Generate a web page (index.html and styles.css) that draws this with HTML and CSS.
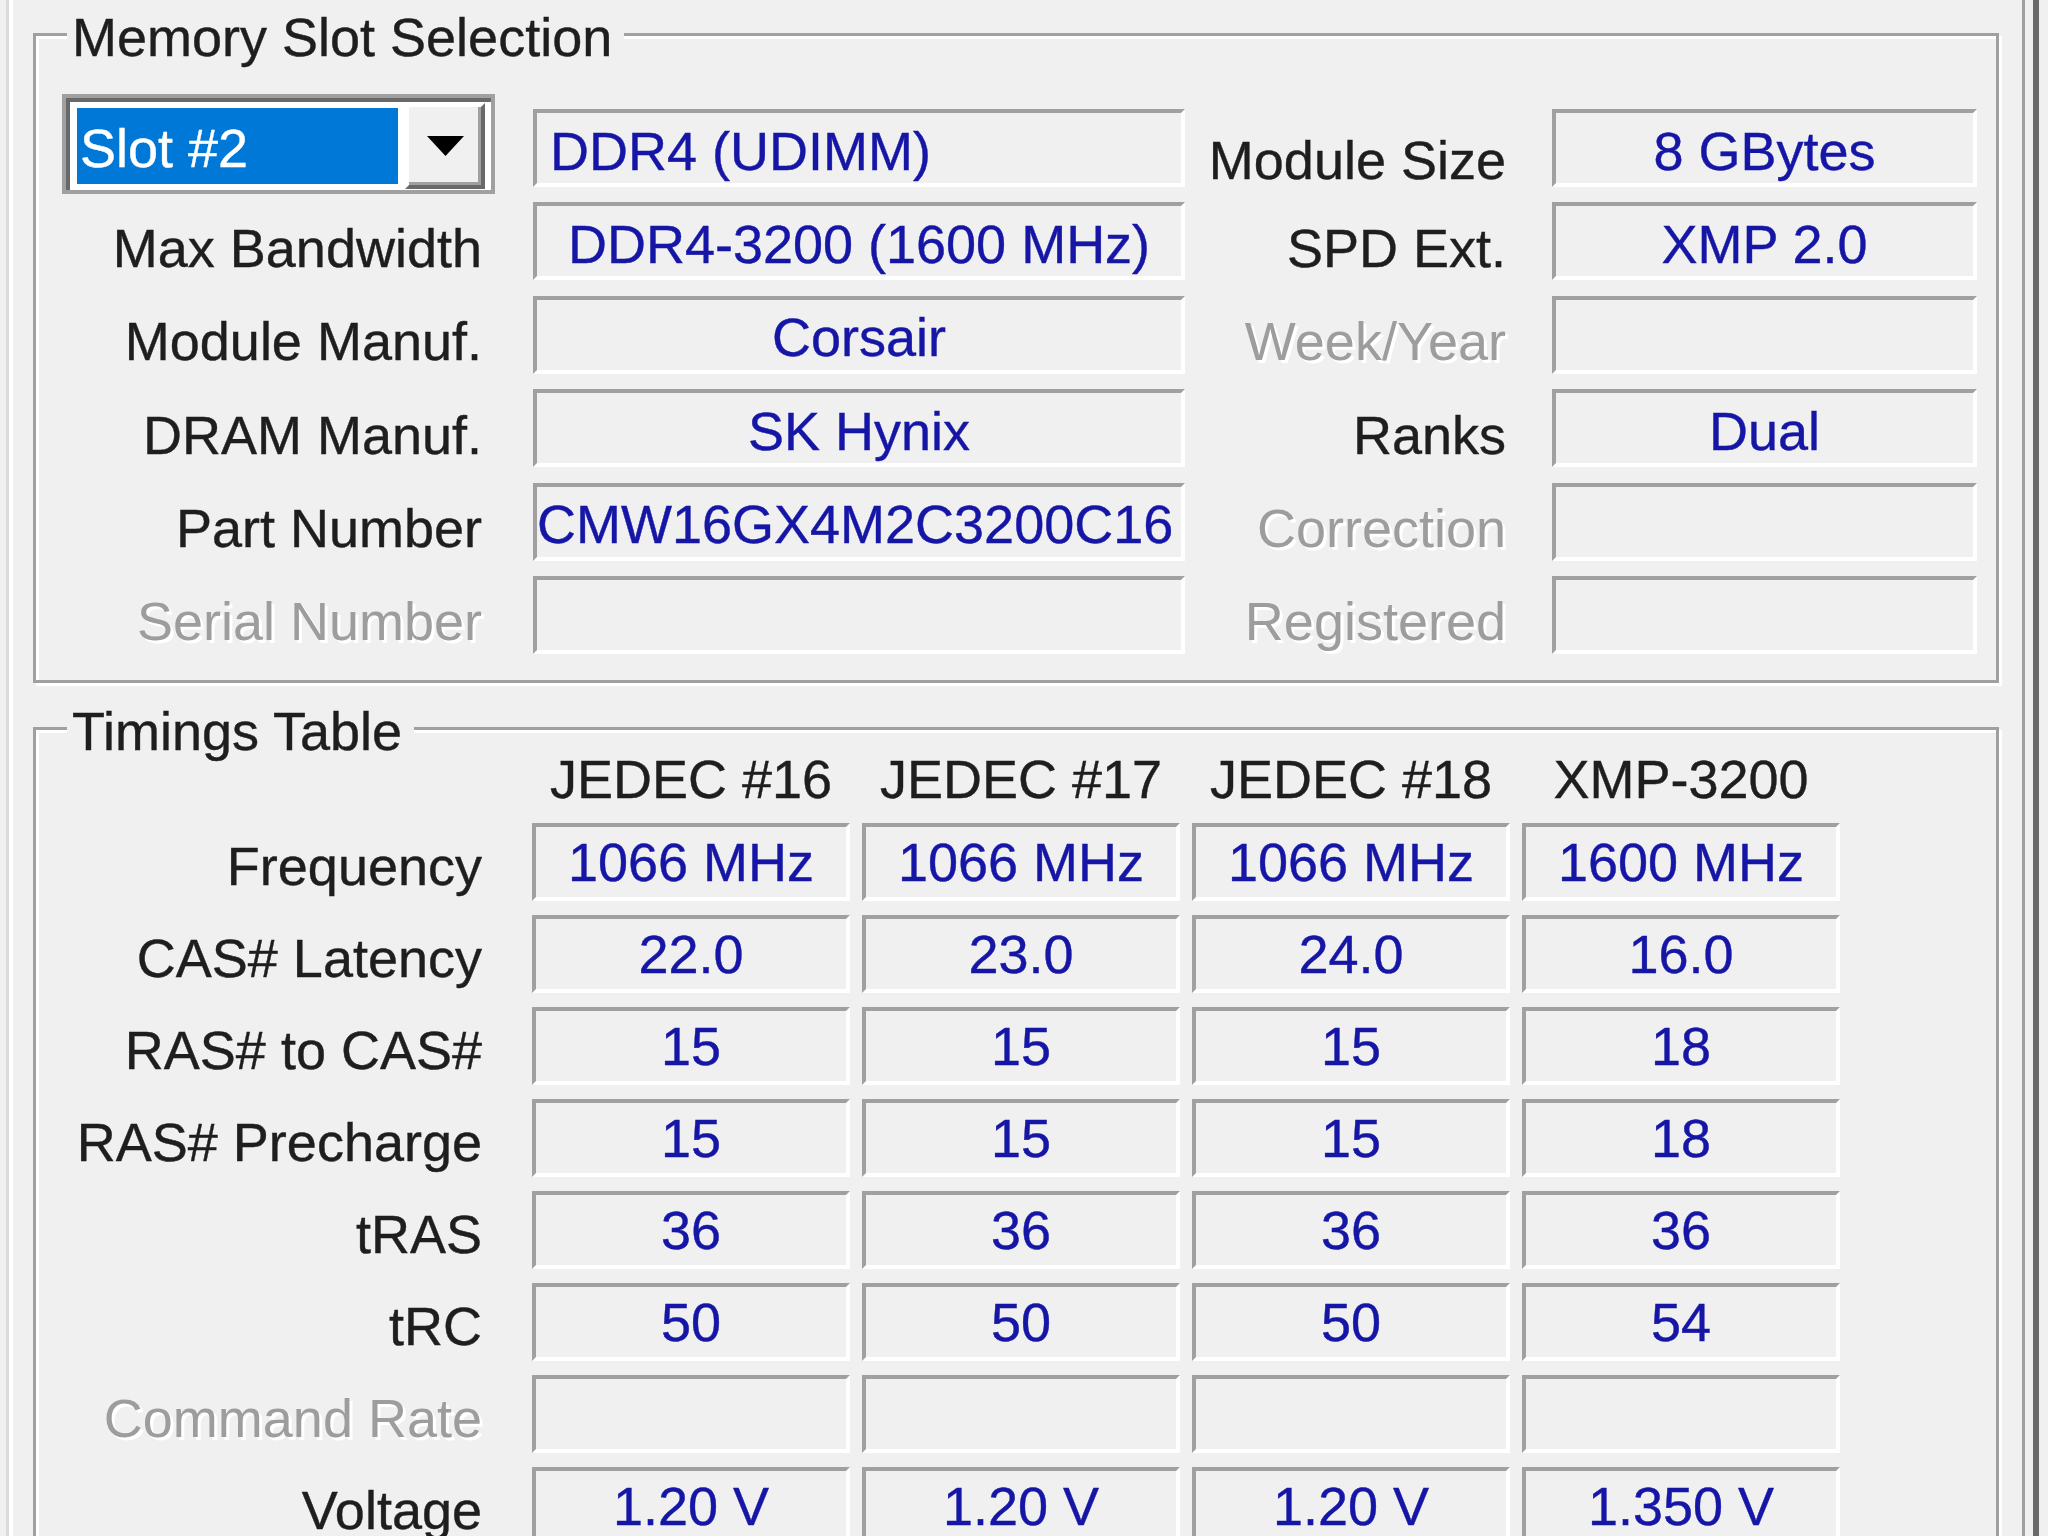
FILE: index.html
```html
<!DOCTYPE html>
<html lang="en">
<head>
  <meta charset="UTF-8" />
  <title>SPD</title>
  <link rel="stylesheet" href="styles.css">
</head>
<body>
  <div class="window">
    <div class="tabpage">

      <div class="group slot-group">
        <span class="legend">Memory Slot Selection</span>
        <div class="slot-grid">
          <div class="combo">
            <span class="combo-value">Slot #2</span>
            <span class="combo-btn">
              <svg width="37" height="20" viewBox="0 0 37 20"><polygon points="0,0 37,0 18.5,20" fill="#000"/></svg>
            </span>
          </div>
          <div class="field left">DDR4 (UDIMM)</div>
          <div class="label side low">Module Size</div>
          <div class="field">8 GBytes</div>

          <div class="label">Max Bandwidth</div>
          <div class="field">DDR4-3200 (1600 MHz)</div>
          <div class="label side">SPD Ext.</div>
          <div class="field">XMP 2.0</div>

          <div class="label">Module Manuf.</div>
          <div class="field">Corsair</div>
          <div class="label side dim">Week/Year</div>
          <div class="field"></div>

          <div class="label">DRAM Manuf.</div>
          <div class="field">SK Hynix</div>
          <div class="label side">Ranks</div>
          <div class="field">Dual</div>

          <div class="label">Part Number</div>
          <div class="field tight">CMW16GX4M2C3200C16</div>
          <div class="label side dim">Correction</div>
          <div class="field"></div>

          <div class="label dim">Serial Number</div>
          <div class="field"></div>
          <div class="label side dim">Registered</div>
          <div class="field"></div>
        </div>
      </div>

      <div class="group timings-group">
        <span class="legend">Timings Table</span>
        <div class="timings-grid">
          <div></div>
          <div class="col-head">JEDEC #16</div>
          <div class="col-head">JEDEC #17</div>
          <div class="col-head">JEDEC #18</div>
          <div class="col-head">XMP-3200</div>

          <div class="label">Frequency</div>
          <div class="field">1066 MHz</div>
          <div class="field">1066 MHz</div>
          <div class="field">1066 MHz</div>
          <div class="field">1600 MHz</div>

          <div class="label">CAS# Latency</div>
          <div class="field">22.0</div>
          <div class="field">23.0</div>
          <div class="field">24.0</div>
          <div class="field">16.0</div>

          <div class="label">RAS# to CAS#</div>
          <div class="field">15</div>
          <div class="field">15</div>
          <div class="field">15</div>
          <div class="field">18</div>

          <div class="label">RAS# Precharge</div>
          <div class="field">15</div>
          <div class="field">15</div>
          <div class="field">15</div>
          <div class="field">18</div>

          <div class="label">tRAS</div>
          <div class="field">36</div>
          <div class="field">36</div>
          <div class="field">36</div>
          <div class="field">36</div>

          <div class="label">tRC</div>
          <div class="field">50</div>
          <div class="field">50</div>
          <div class="field">50</div>
          <div class="field">54</div>

          <div class="label dim">Command Rate</div>
          <div class="field"></div>
          <div class="field"></div>
          <div class="field"></div>
          <div class="field"></div>

          <div class="label">Voltage</div>
          <div class="field">1.20 V</div>
          <div class="field">1.20 V</div>
          <div class="field">1.20 V</div>
          <div class="field">1.350 V</div>
        </div>
      </div>

    </div>
    <div class="edge"></div>
  </div>
</body>
</html>
```

FILE: styles.css
```css
body {
  margin: 0;
  background-color: #f0f0f0;
  color: #1e1e1e;
  font-family: "Liberation Sans", Arial, sans-serif;
  font-size: 54px;
  -webkit-text-stroke: 0.4px currentColor;
  overflow: hidden;
}

.window {
  display: flex;
  height: 1536px;
}

.tabpage {
  box-sizing: border-box;
  width: 2016px;
  margin-left: 9px;
  padding: 33px 0 0 20px;
  border-left: 4px solid #fff;
  border-right: 3px solid #a0a0a0;
  box-shadow: -3px 0 0 #dadada;
}

.edge {
  width: 6px;
  margin-left: 8px;
  background-color: #6b6b6b;
}

.group {
  position: relative;
  box-sizing: border-box;
  width: 1966px;
  border: 3px solid #a0a0a0;
  box-shadow: inset 3px 3px 0 #fff, 3px 3px 0 #fff;
  padding-left: 26px;
}

.legend {
  position: absolute;
  top: -30px;
  left: 31px;
  padding: 0 12px 0 5px;
  background-color: #f0f0f0;
  line-height: 62px;
  white-space: nowrap;
}

.slot-group {
  height: 650px;
  padding-top: 73px;
}

.timings-group {
  height: 900px;
  margin-top: 44px;
  padding-top: 19px;
}

.slot-grid {
  display: grid;
  grid-template-columns: 471px 652px 367px 425px;
  grid-template-rows: repeat(6, 78px);
  row-gap: 15.4px;
}

.timings-grid {
  display: grid;
  grid-template-columns: 458px repeat(4, 318px);
  grid-template-rows: 60px repeat(8, 78px);
  column-gap: 12px;
  row-gap: 14px;
}

.label {
  display: flex;
  align-items: center;
  justify-content: flex-end;
  box-sizing: border-box;
  padding: 13px 51px 0 0;
  white-space: nowrap;
}

.label.side {
  padding-right: 46px;
}

.label.low {
  padding-top: 23px;
}

.timings-grid .label {
  padding: 8px 38px 0 0;
}

.dim {
  color: #9d9d9d;
  -webkit-text-stroke: 0;
  text-shadow: 3px 3px 0 #fff;
}

.col-head {
  display: flex;
  align-items: center;
  justify-content: center;
  white-space: nowrap;
}

.field {
  display: flex;
  align-items: center;
  justify-content: center;
  box-sizing: border-box;
  border-style: solid;
  border-width: 4px;
  border-color: #a0a0a0 #fff #fff #a0a0a0;
  color: #1616a6;
  white-space: nowrap;
  overflow: hidden;
}

.slot-grid .field {
  padding-top: 5px;
}

.slot-grid .field.left {
  justify-content: flex-start;
  padding-left: 13px;
}

.slot-grid .field.tight {
  justify-content: flex-start;
  padding-left: 0;
}

.combo {
  display: flex;
  align-self: start;
  box-sizing: border-box;
  width: 433px;
  height: 100px;
  margin-top: -15px;
  padding: 5px 4px 1px 6px;
  border: 4px solid #a0a0a0;
  box-shadow: inset 4px 4px 0 #696969;
  background-color: #fff;
}

.combo-value {
  display: flex;
  align-items: center;
  box-sizing: border-box;
  width: 321px;
  margin: 5px 7px 5px 5px;
  padding: 4px 0 0 3px;
  background-color: #0078d7;
  color: #fff;
  white-space: nowrap;
}

.combo-btn {
  display: flex;
  align-items: center;
  justify-content: center;
  box-sizing: border-box;
  width: 80px;
  margin-right: 2px;
  background-color: #f0f0f0;
  border-style: solid;
  border-width: 4px;
  border-color: #fff #696969 #696969 #fff;
  box-shadow: inset -3px -3px 0 #a0a0a0;
}
```
